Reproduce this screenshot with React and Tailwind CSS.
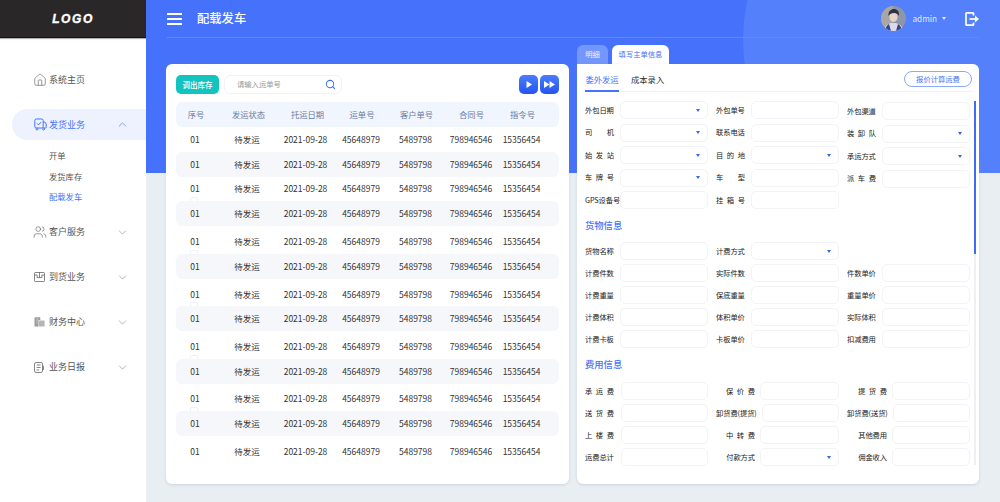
import { ChevronDown, ChevronUp, House, Search, Users } from "lucide-react";

const rows = [
  "h-[25px]",
  "h-[24.5px] bg-[#f6f7fa]",
  "h-[24.5px]",
  "h-[25px] bg-[#f6f7fa]",
  "h-[28px] pt-[2px]",
  "h-[24.5px] bg-[#f6f7fa]",
  "h-[27.5px] pt-[4px]",
  "h-[25px] bg-[#f6f7fa]",
  "h-[28px] pt-[3px]",
  "h-[25px] bg-[#f6f7fa]",
  "h-[27px] pt-[2px]",
  "h-[25px] bg-[#f6f7fa]",
  "h-[30px]",
];

const columns = ["序号", "发运状态", "托运日期", "运单号", "客户单号", "合同号", "指令号"];
const values = ["01", "待发运", "2021-09-28", "45648979", "5489798", "798946546", "15356454"];

const section1 = [
  ["外包日期", true], ["外包单号"], ["外包渠道"],
  ["司机", true], ["联系电话"], ["装卸队", true],
  ["始发站", true], ["目的地", true], ["承运方式", true],
  ["车牌号", true], ["车型"], ["派车费"],
  ["GPS设备号"], ["挂箱号"], null,
];
const section2 = [
  ["货物名称"], ["计费方式", true], null,
  ["计费件数"], ["实际件数"], ["件数单价"],
  ["计费重量"], ["保底重量"], ["重量单价"],
  ["计费体积"], ["体积单价"], ["实际体积"],
  ["计费卡板"], ["卡板单价"], ["扣减费用"],
];
const section3 = [
  ["承运费"], ["保价费"], ["提货费"],
  ["送货费"], ["卸货费(提货)"], ["卸货费(送货)"],
  ["上楼费"], ["中转费"], ["其他费用"],
  ["运费总计"], ["付款方式", true], ["佣金收入"],
];

const costWidths = ["w-[87px]", "w-[79px]", "w-[78px]"];

function Label({ text }) {
  if (text.length < 4) {
    return (
      <span className="flex w-[29px] shrink-0 justify-between text-[7.3px] text-[#222]">
        {text.split("").map((c, i) => (
          <span key={i}>{c}</span>
        ))}
      </span>
    );
  }
  return <span className="shrink-0 whitespace-nowrap text-[7.3px] tracking-[-0.1px] text-[#222]">{text}</span>;
}

function Box({ select, className }) {
  return (
    <div
      className={`flex h-[18px] items-center justify-end rounded-[5px] border border-[#f1f3f6] bg-white pr-[7px] ${className}`}
    >
      {select && (
        <svg width="4" height="3" viewBox="0 0 4 3">
          <polygon points="0,0 4,0 2,3" fill="#3a63f0" />
        </svg>
      )}
    </div>
  );
}

function Field({ item, lift }) {
  if (!item) return <div />;
  return (
    <div className={`flex h-[18px] items-center justify-between ${lift ? "translate-y-px" : ""}`}>
      <Label text={item[0]} />
      <Box select={item[1]} className="w-[88px]" />
    </div>
  );
}

function CostField({ item, index }) {
  const first = index % 3 === 0;
  return (
    <div className={`flex h-[18px] items-center ${first ? "justify-between" : "justify-end gap-[5px]"}`}>
      <Label text={item[0]} />
      <Box select={item[1]} className={costWidths[index % 3]} />
    </div>
  );
}

function SendIcon() {
  return (
    <svg width="13" height="13" viewBox="0 0 13 13" fill="none" stroke="#4672fb" strokeWidth="1">
      <rect x="0.8" y="1" width="8.4" height="9" rx="1.5" />
      <path d="M9.2 4h1.6l1.4 2v3.4a.6.6 0 0 1-.6.6h-2.4" />
      <path d="M3 5.4l1.5 1.5 2.6-2.8" />
      <circle cx="3" cy="11" r="1" fill="#fff" />
      <circle cx="9.6" cy="11" r="1" fill="#fff" />
    </svg>
  );
}

function ArriveIcon() {
  return (
    <svg width="11" height="10" viewBox="0 0 11 10" fill="none" stroke="#666" strokeWidth="0.8">
      <rect x="0.5" y="0.5" width="10" height="9" rx="0.8" />
      <path d="M0.5 3h2.6v2.6h4.8V3h2.6M5.5 0.5v5" />
    </svg>
  );
}

function FinanceIcon() {
  return (
    <svg width="11" height="10" viewBox="0 0 11 10" fill="#9a9a9a">
      <path d="M0.5 0.8a.6.6 0 0 1 .6-.6h4.6a.6.6 0 0 1 .6.6V3H4.5v6.6H1.1a.6.6 0 0 1-.6-.6z" />
      <rect x="5" y="3.6" width="5.6" height="6" rx="0.6" fill="#b5b5b5" />
      <path d="M1.8 2h3M1.8 4h2M1.8 6h2" stroke="#e4e4e4" strokeWidth="0.6" />
    </svg>
  );
}

function ReportIcon() {
  return (
    <svg width="10" height="11" viewBox="0 0 10 11" fill="none" stroke="#666" strokeWidth="0.8">
      <rect x="0.5" y="0.5" width="8" height="10" rx="1.6" />
      <path d="M2.6 3h4M2.6 5.5h4M2.6 8h2.6M8.5 4.2h1v3.4h-1" />
    </svg>
  );
}

function MenuItem({ icon, text }) {
  return (
    <div className="flex h-[45px] items-center pl-[34px] pr-[17px] text-[9px] text-[#555]">
      <span className="flex w-[15px] shrink-0">{icon}</span>
      <span className="flex-1">{text}</span>
      <ChevronDown size={13} strokeWidth={1} color="#777" />
    </div>
  );
}

function Sidebar() {
  return (
    <aside className="flex w-[146px] shrink-0 flex-col bg-white">
      <div className="flex h-[38px] items-center justify-center border-b border-[#111] bg-[#2a2729] shadow-[0_1px_1px_rgba(0,0,0,0.3)]">
        <span className="text-[12px] font-bold italic tracking-[1.6px] text-white [-webkit-text-stroke:0.4px_white] [font-family:'Liberation_Sans',sans-serif]">
          LOGO
        </span>
      </div>
      <div className="mt-[19px] flex h-[45px] items-center pl-[33px] text-[9px] text-[#555]">
        <span className="flex w-[16px] shrink-0">
          <House size={14} strokeWidth={1} color="#555" />
        </span>
        系统主页
      </div>
      <div className="ml-3 mt-[7px] flex h-[31px] items-center rounded-l-full bg-[#edf2fe] pl-[22px] pr-[17px] text-[9px] text-[#4672fb]">
        <span className="flex w-[15px] shrink-0">
          <SendIcon />
        </span>
        <span className="flex-1">发货业务</span>
        <ChevronUp size={13} strokeWidth={1.2} color="#4672fb" />
      </div>
      <div className="mt-[5px] flex flex-col pl-[49px] text-[8.3px] leading-[20.5px] text-[#555]">
        <span>开单</span>
        <span>发货库存</span>
        <span className="text-[#4672fb]">配载发车</span>
      </div>
      <div className="mt-[3px] flex flex-col">
        <MenuItem icon={<Users size={14} strokeWidth={1} color="#555" className="-ml-px" />} text="客户服务" />
        <MenuItem icon={<ArriveIcon />} text="到货业务" />
        <MenuItem icon={<FinanceIcon />} text="财务中心" />
        <MenuItem icon={<ReportIcon />} text="业务日报" />
      </div>
    </aside>
  );
}

function Avatar() {
  return (
    <svg width="25" height="25" viewBox="0 0 25 25" className="rounded-full">
      <rect width="25" height="25" fill="#8d96a8" />
      <rect width="12" height="25" fill="#a9a7a6" />
      <path d="M3 25c1-6 4-8 9.5-8s8.5 2 9.5 8z" fill="#d9dcec" />
      <path d="M4 25c.5-4 2-6 4-7l2 7zM21 25c-.5-4-2-6-4-7l-2 7z" fill="#3d4478" />
      <ellipse cx="12.5" cy="11" rx="4" ry="5" fill="#e8d3cc" />
      <path d="M7.5 10c-.5-5 2.5-7 5.5-7s5.5 2 5 7c-1-2-2.5-3-5-3s-4.5 1-5.5 3z" fill="#2e3142" />
    </svg>
  );
}

function Header() {
  return (
    <header className="flex h-[38px] items-center border-b border-[#5f86fc] text-white">
      <svg width="15" height="12" viewBox="0 0 15 12" fill="#fff" className="mr-[15px]">
        <rect width="15" height="2" rx="0.5" />
        <rect y="5" width="15" height="2" rx="0.5" />
        <rect y="10" width="15" height="2" rx="0.5" />
      </svg>
      <span className="flex-1 text-[12.3px] font-medium">配载发车</span>
      <Avatar />
      <span className="ml-[6px] text-[8.2px] text-[#dfe7ff]">admin</span>
      <svg width="4" height="3" viewBox="0 0 4 3" className="ml-[5px]">
        <polygon points="0,0 4,0 2,3" fill="#e6ecff" />
      </svg>
      <svg width="15" height="14" viewBox="0 0 15 14" fill="none" stroke="#fff" strokeWidth="1.7" className="-mr-px ml-[19px]">
        <path d="M8.5 3.5V1.5a.7.7 0 0 0-.7-.7H1.7a.7.7 0 0 0-.7.7v11a.7.7 0 0 0 .7.7h6.1a.7.7 0 0 0 .7-.7v-2" />
        <path d="M4.5 7h6" />
        <path d="M10 3.4L14 7l-4 3.6z" fill="#fff" stroke="none" />
      </svg>
    </header>
  );
}

function TableCard() {
  return (
    <section className="mt-[19px] -ml-px flex h-[420px] w-[403px] flex-col rounded-[6px] bg-white px-[10px] pt-[11px] shadow-[0_1px_3px_rgba(120,140,170,0.25)]">
      <div className="flex h-[19px] items-center">
        <button className="h-[19px] w-[43px] rounded-[5px] bg-[#13c3bf] text-[7.5px] font-medium text-white">
          调出库存
        </button>
        <div className="ml-[5px] flex h-[19px] w-[118px] items-center justify-between rounded-[6px] border border-[#f1f3f7] pl-[12px] pr-[5px] text-[7.3px] text-[#999]">
          请输入运单号
          <Search size={11} strokeWidth={2.2} color="#3f74f6" />
        </div>
        <div className="ml-auto flex gap-[2px]">
          <button className="flex h-[19px] w-[19px] items-center justify-center rounded-[5px] bg-gradient-to-b from-[#4a7cff] to-[#2553ef]">
            <svg width="6" height="7" viewBox="0 0 6 7" fill="#fff">
              <polygon points="0.5,0 6,3.5 0.5,7" />
            </svg>
          </button>
          <button className="flex h-[19px] w-[19px] items-center justify-center rounded-[5px] bg-gradient-to-b from-[#4a7cff] to-[#2553ef]">
            <svg width="11" height="7" viewBox="0 0 11 7" fill="#fff">
              <polygon points="0,0 5.5,3.5 0,7" />
              <polygon points="5.5,0 11,3.5 5.5,7" />
            </svg>
          </button>
        </div>
      </div>
      <div className="mt-2 grid h-[25px] grid-cols-[40px_65px_53px_56px_53px_57px_45px] items-center justify-items-center rounded-[6px] bg-[#f1f5fe] text-[8.3px] text-[#6a7a9e]">
        {columns.map((c) => (
          <span key={c} className="whitespace-nowrap">
            {c}
          </span>
        ))}
      </div>
      {rows.map((r, i) => (
        <div
          key={i}
          className={`relative grid grid-cols-[38px_66px_51px_60px_49px_62px_39px] items-center justify-items-center rounded-[6px] text-[8.5px] text-[#333] ${r}`}
        >
          {values.map((v) => (
            <span key={v} className="whitespace-nowrap">
              {v}
            </span>
          ))}
          {i > 1 && i < 11 && i % 2 === 0 && (
            <span className="absolute bottom-0 left-[14px] h-[4px] w-[8px] rounded-t-[2px] border border-b-0 border-[#eef0f4]" />
          )}
        </div>
      ))}
    </section>
  );
}

function FormCard() {
  return (
    <div className="flex w-[402px] flex-col">
      <div className="flex h-[19px] items-end gap-[4px] text-[7.3px]">
        <span className="flex h-[19px] w-[31px] items-center justify-center rounded-t-[6px] bg-[#7397fd] text-[#eef3ff]">
          明细
        </span>
        <span className="flex h-[19px] w-[57px] items-center justify-center rounded-t-[6px] bg-white text-[#4672fb]">
          填写主单信息
        </span>
      </div>
      <section className="flex h-[420px] flex-col rounded-[6px] rounded-tl-none bg-white pl-[8px] pr-[3px] pt-[7px] shadow-[0_1px_3px_rgba(120,140,170,0.25)]">
        <div className="mr-[4px] flex h-[21px] items-start border-b border-[#eff1f5]">
          <span className="flex h-[21px] w-[34px] items-start justify-center border-b-2 border-[#4672fb] pt-[2px] text-[8.3px] text-[#4672fb]">
            委外发运
          </span>
          <span className="ml-[12px] pt-[2px] text-[8.3px] text-[#333]">成本录入</span>
          <button className="ml-auto h-[16px] w-[68px] rounded-[8px] border border-[#8aa8fd] text-[7.3px] text-[#4672fb]">
            报价计算运费
          </button>
        </div>
        <div className="mt-[9px] flex h-[364px]">
          <div className="w-[385px]">
            <div className="grid grid-cols-[123px_123px_123px] gap-x-2 gap-y-[4.5px]">
              {section1.map((f, i) => (
                <Field key={i} item={f} lift={i % 3 === 2} />
              ))}
            </div>
            <div className="flex h-[33px] items-center text-[9.3px] font-medium text-[#4672fb]">货物信息</div>
            <div className="grid grid-cols-[123px_123px_123px] gap-x-2 gap-y-[4px]">
              {section2.map((f, i) => (
                <Field key={i} item={f} />
              ))}
            </div>
            <div className="flex h-[34px] items-center text-[9.3px] font-medium text-[#4672fb]">费用信息</div>
            <div className="grid grid-cols-[123px_123px_123px] gap-x-2 gap-y-[4px]">
              {section3.map((f, i) => (
                <CostField key={i} item={f} index={i} />
              ))}
            </div>
          </div>
          <div className="ml-[4px] h-full w-[2px] bg-[#eef0f4]">
            <div className="h-[153px] w-[2px] bg-[#3f6bf5]" />
          </div>
        </div>
      </section>
    </div>
  );
}

export default function App() {
  return (
    <div className="flex h-[502px] w-[1000px] overflow-hidden [font-family:'Noto_Sans_CJK_SC','Noto_Sans',sans-serif]">
      <Sidebar />
      <main className="relative flex-1 overflow-hidden bg-[#e9eef3]">
        <div className="absolute inset-x-0 top-0 h-[173px] overflow-hidden bg-[#4672fb]">
          <div className="absolute left-[597px] top-[-137px] h-[354px] w-[354px] rounded-full bg-[#5580fc]" />
        </div>
        <div className="relative pl-[21px] pr-[21px]">
          <Header />
          <div className="mt-[7px] flex justify-between">
            <TableCard />
            <FormCard />
          </div>
        </div>
      </main>
    </div>
  );
}
